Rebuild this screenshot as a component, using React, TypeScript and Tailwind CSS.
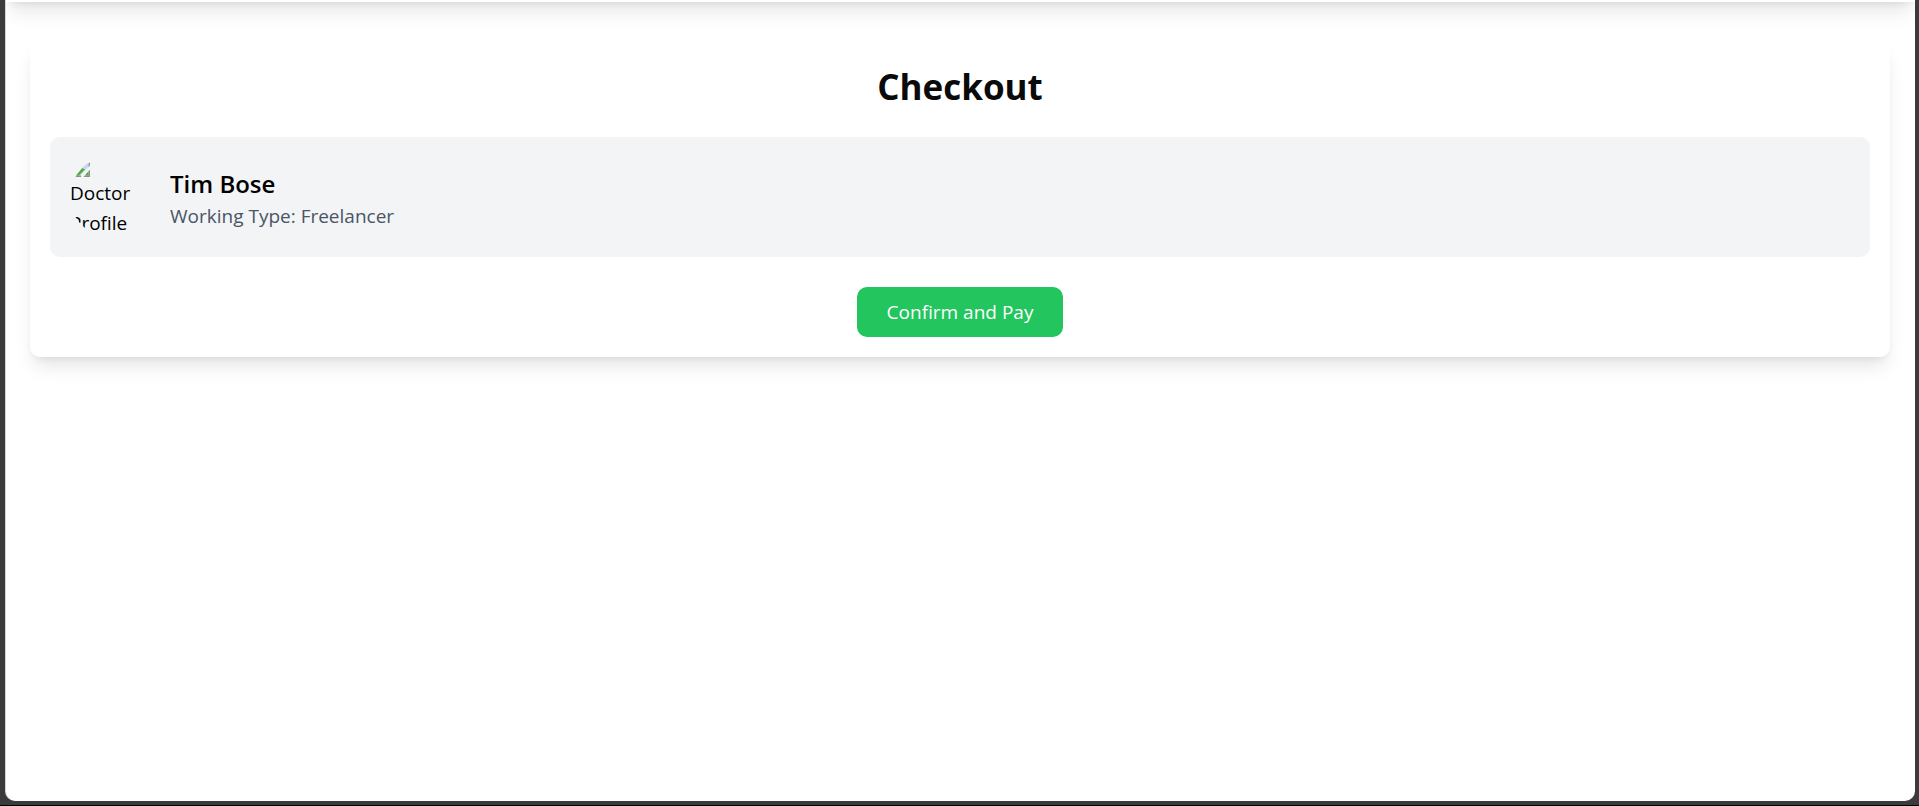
function BrokenImageIcon() {
  return (
    <svg viewBox="0 0 20 20" className="mb-px block size-5" aria-hidden="true">
      <path d="M0 0H15L20 5V20H0Z" fill="#8f8f8f" />
      <path d="M1 1H14L18.5 5V18.5H1Z" fill="#d5e0f9" />
      <path d="M2 2H13L18.5 5V9L10 16H2Z" fill="#c3d4f7" />
      <path d="M2 18.5V17Q8 11 12 11L15 12.5L9 18.5Z" fill="#56ab3c" />
      <path d="M13 18.5L16 15L18.5 14V18.5Z" fill="#56ab3c" />
      <path d="M20 8.5L11 18V20H13.5L20 12.5Z" fill="#f3f4f6" />
    </svg>
  );
}

function DoctorPhoto() {
  return (
    <div className="size-20 shrink-0 overflow-hidden rounded-full text-[19px] leading-[30px] text-black">
      <BrokenImageIcon />
      <p className="w-20">Doctor Profile</p>
    </div>
  );
}

export default function App() {
  return (
    <div className="flex h-screen flex-col border-b border-black bg-[#3b3b3b] pr-1 pb-1 pl-[5px] font-['Open_Sans','Noto_Sans',sans-serif]">
      <div className="flex-1 overflow-hidden rounded-b-[10px] border-l border-gray-300 bg-white">
        <header className="-mt-[78px] h-20 bg-white shadow-[0_13px_19px_-4px_rgb(0_0_0/0.1),0_5px_8px_-5px_rgb(0_0_0/0.1)]" />
        <main className="pt-10 pr-[25px] pl-6">
          <section className="rounded-[10px] bg-white p-5 shadow-[0_13px_19px_-4px_rgb(0_0_0/0.1),0_5px_8px_-5px_rgb(0_0_0/0.1)]">
            <h1 className="pt-0.5 text-center text-[35px] leading-[45px] font-bold text-neutral-950">Checkout</h1>
            <div className="mt-7 flex items-center gap-5 rounded-[10px] bg-gray-100 p-5">
              <DoctorPhoto />
              <div className="pt-0.5">
                <h2 className="text-[24px] leading-[35px] font-semibold text-black">Tim Bose</h2>
                <p className="text-[19px] leading-[30px] text-gray-600">Working Type: Freelancer</p>
              </div>
            </div>
            <div className="mt-[30px] flex justify-center">
              <button type="button" className="rounded-[10px] bg-[#22c55e] px-[30px] py-[10px] text-[19px] leading-[30px] text-white">
                Confirm and Pay
              </button>
            </div>
          </section>
        </main>
      </div>
    </div>
  );
}
